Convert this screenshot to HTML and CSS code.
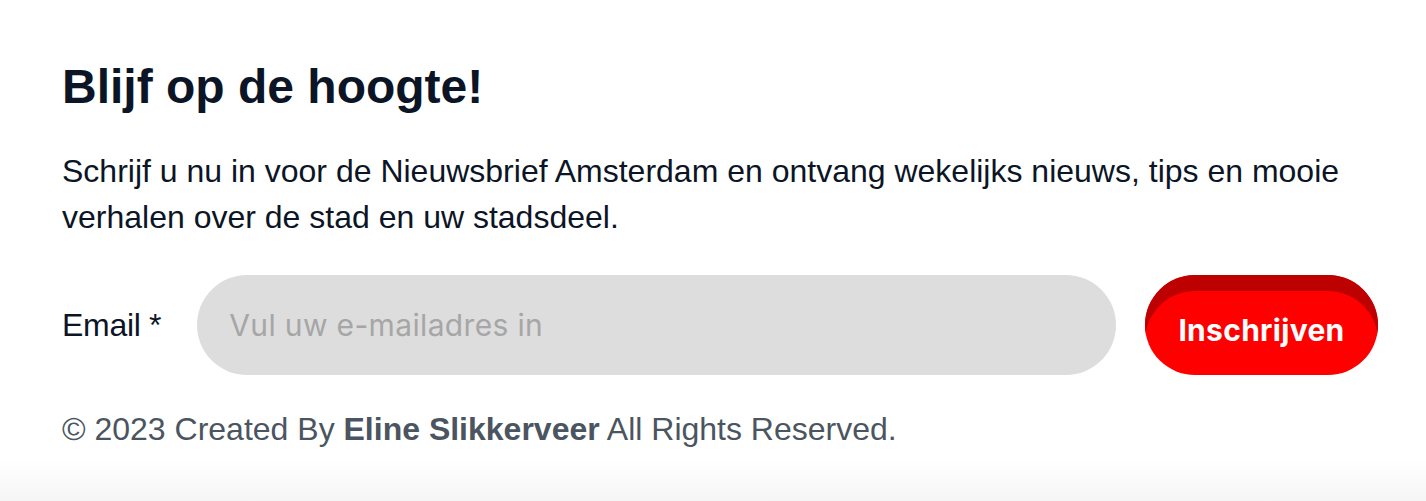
FILE: index.html
```html
<!DOCTYPE html>
<html lang="nl">
<head>
<meta charset="utf-8">
<title>Nieuwsbrief</title>
<link rel="stylesheet" href="styles.css">
</head>
<body>
<section class="newsletter">
  <h2 class="newsletter-title">Blijf op de hoogte!</h2>
  <p class="newsletter-text">Schrijf u nu in voor de Nieuwsbrief Amsterdam en ontvang wekelijks nieuws, tips en mooie verhalen over de stad en uw stadsdeel.</p>
  <form class="newsletter-form">
    <label class="field-label" for="email">Email *</label>
    <input class="field-input" id="email" type="email" placeholder="Vul uw e-mailadres in">
    <button class="submit-btn" type="button">Inschrijven</button>
  </form>
  <p class="credits">© 2023 Created By <strong>Eline Slikkerveer</strong> All Rights Reserved.</p>
</section>
<div class="page-shade"></div>
</body>
</html>
```
FILE: styles.css
```css
html, body {
  margin: 0;
  padding: 0;
  background: #ffffff;
}

body {
  font-family: "Liberation Sans", Arial, sans-serif;
  color: #0b1526;
  height: 501px;
  overflow: hidden;
  display: flex;
  flex-direction: column;
}

.newsletter {
  padding: 59px 48px 0 62px;
}

.newsletter-title {
  margin: 0;
  font-size: 48px;
  font-weight: 700;
  line-height: 55px;
  color: #0b1526;
}

.newsletter-text {
  margin: 34px 0 0;
  font-size: 32px;
  line-height: 46px;
  max-width: 1300px;
}

.newsletter-form {
  margin-top: 35px;
  display: flex;
  align-items: center;
}

.field-label {
  font-size: 32px;
  letter-spacing: -0.3px;
  margin-right: 36px;
  white-space: nowrap;
}

.field-input {
  flex: 1;
  height: 100px;
  box-sizing: border-box;
  border: none;
  border-radius: 50px;
  background: #dddddd;
  padding: 0 32px;
  font-family: Inter, "Noto Sans", sans-serif;
  font-size: 30px;
  letter-spacing: 0.35px;
  color: #222;
  outline: none;
}

.field-input::placeholder {
  color: #a6a6a6;
}

.submit-btn {
  margin-left: 29px;
  width: 233px;
  height: 100px;
  box-sizing: border-box;
  padding: 9px 0 0;
  border: none;
  border-radius: 50px;
  background: #ff0000;
  box-shadow: inset 0 16px 0 #bd0000;
  color: #ffffff;
  font-family: Inter, "Noto Sans", sans-serif;
  font-size: 30px;
  font-weight: 700;
  letter-spacing: 0.3px;
  cursor: pointer;
}

.credits {
  margin: 36px 0 0;
  font-size: 32px;
  line-height: 37px;
  color: #4b5561;
}

.credits strong {
  font-weight: 700;
}

.page-shade {
  flex: 1;
  background: linear-gradient(to bottom, #ffffff 0%, #ffffff 20%, #f5f5f5 100%);
}
```
